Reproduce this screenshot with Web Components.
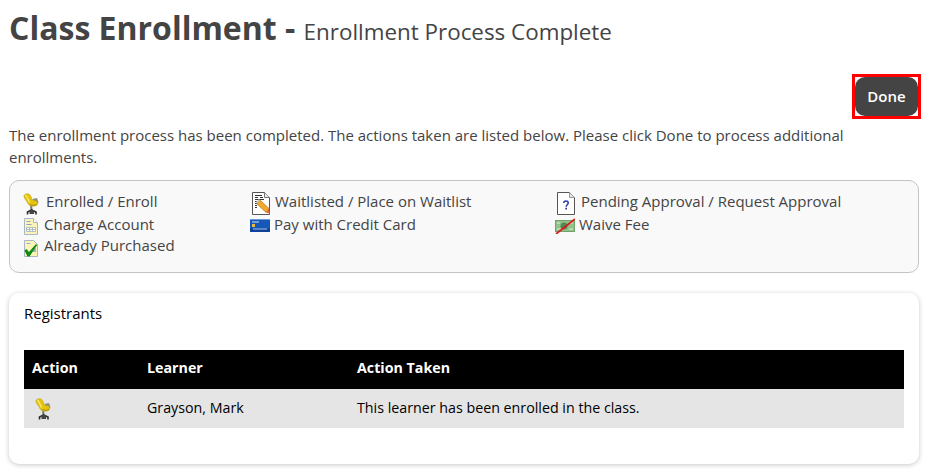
<!DOCTYPE html>
<html>
<head>
<meta charset="utf-8">
<title>Class Enrollment</title>
<style>
  html, body { margin: 0; padding: 0; background: #fff; }
  body { font-family: "Open Sans", sans-serif; color: #444; min-height: 474px; }
</style>
</head>
<body>
<enroll-page>
  <page-title slot="title" sub="Enrollment Process Complete">Class Enrollment -</page-title>
  <done-button slot="action">Done</done-button>
  <span slot="intro">The enrollment process has been completed. The actions taken are listed below. Please click Done to process additional enrollments.</span>
  <icon-legend slot="legend"></icon-legend>
  <registrant-card slot="card" heading="Registrants"></registrant-card>
</enroll-page>

<script>
const ICONS = {
  chair: `<svg viewBox="0 0 16 22" width="16" height="22">
    <path d="M8 13l.6 4" stroke="#777" stroke-width="2"/>
    <path d="M4.500 21.500v-2.500l4-2 4.500 2v2.500" fill="none" stroke="#2c2c2c" stroke-width="1.600"/>
    <path d="M6.500 17h4.500v4H6.500z" fill="#444"/>
    <path d="M9.500 6l4.500-1 1.500 4.500-3 2z" fill="#8c8c84"/>
    <path d="M1 2.500C2 .5 6 0 7.500 2.500L9.500 7l3.500.8c2 .7 2.300 3 1 4.200-2.300 1.800-5.800 1.500-7.500.5C5 11.500 4.500 9.500 3.500 8 2.300 6.300.5 4.500 1 2.500z" fill="#e6c30e" stroke="#b39a10" stroke-width=".5"/>
    <path d="M2.500 2c1.500 1.500 2.800 4.500 4 7.500" fill="none" stroke="#f8e86a" stroke-width="1.500"/>
    <path d="M7 11.500c2 1 5 1 7 0" fill="none" stroke="#a98c0a" stroke-width="1"/>
  </svg>`,
  sheet: `<svg viewBox="0 0 14 17" width="14" height="17">
    <path d="M.5.500h9l4 4v12H.5z" fill="#faf4b8" stroke="#a9b6c6"/>
    <path d="M9.500.500v4h4" fill="#fff" stroke="#a9b6c6"/>
    <path d="M2.500 3h4v1h-4zM2.500 6h5v1h-5z" fill="#8fa3c0"/>
    <path d="M2.500 9.500h9v4h-9z" fill="#fffde8" stroke="#9fb0c6" stroke-width=".8"/>
    <path d="M5.500 9.500v4M8.500 9.500v4M2.500 11.500h9" stroke="#9fb0c6" stroke-width=".8"/>
  </svg>`,
  purchased: `<svg viewBox="0 0 14 17" width="14" height="17">
    <path d="M.5.500h9l4 4v12H.5z" fill="#faf4b8" stroke="#a9b6c6"/>
    <path d="M2.500 3h4v1h-4zM8.500 8h3.500v4H8.500z" fill="#9fb0c6"/>
    <path d="M.5 10.500l2-1.500 2.500 3 6.500-7.500h2L5.500 16.500H3.500z" fill="#0f8a12"/>
  </svg>`,
  waitlist: `<svg viewBox="0 0 18 23" width="18" height="23">
    <path d="M.5.500h12l5 5v17H.5z" fill="#fff" stroke="#555"/>
    <path d="M12.500.500v5h5" fill="#e8e8e8" stroke="#777"/>
    <path d="M3 3.500h7M3 5.500h3M8 5.500h3M3 7.500h9M3 9.500h4M3 11.500h3M3 13.500h2M3 15.500h2" stroke="#333" stroke-width="1"/>
    <path d="M5 12l3-4 9 8.500-3 4z" fill="#f0a92a" stroke="#b36f10" stroke-width=".6"/>
    <path d="M14 20.500l3-4 1 5z" fill="#e2603a"/>
    <path d="M5 12l-1-2 3-3 1 1z" fill="#c9c9c9"/>
  </svg>`,
  card: `<svg viewBox="0 0 20 13" width="20" height="13">
    <rect width="20" height="13" rx="1" fill="#1757b8"/>
    <path d="M0 9.500h20V13H0z" fill="#0f429a"/>
    <path d="M0 0h20v1H0z" fill="#6a9ade"/>
    <path d="M2 2.500h7v1H2z" fill="#d6e4f6"/>
    <path d="M2 5h3v3H2z" fill="#e9b83e"/>
    <path d="M3 9.500h14v1H3z" fill="#a9c4e8"/>
  </svg>`,
  pending: `<svg viewBox="0 0 18 23" width="18" height="23">
    <path d="M.5.500h12l5 5v17H.5z" fill="#fff" stroke="#555"/>
    <path d="M12.500.500v5h5" fill="#e4e4e4" stroke="#999"/>
    <path d="M6.800 11c0-2.800 4.400-2.800 4.400 0 0 1.800-2 1.800-2 3.700" fill="none" stroke="#2a3ab0" stroke-width="1.500"/>
    <path d="M8.300 15.700h1.700v1.800H8.300z" fill="#2a3ab0"/>
  </svg>`,
  waive: `<svg viewBox="0 0 20 16" width="20" height="16">
    <rect y="2" width="20" height="12" fill="#6fa468"/>
    <path d="M1 3h18v10H1z" fill="#94c08a"/>
    <ellipse cx="9" cy="8" rx="3.500" ry="3.500" fill="#4f8a4e"/>
    <path d="M2 5h3M14 5h4M2 11h4M14 11h4" stroke="#dcebd6" stroke-width="1"/>
    <path d="M1 16L20 1" stroke="#e0141a" stroke-width="1.700"/>
  </svg>`
};

class ActionIcon extends HTMLElement {
  constructor() {
    super();
    this.attachShadow({ mode: "open" });
  }
  connectedCallback() {
    this.shadowRoot.innerHTML = `<style>:host{display:inline-flex;flex:none} svg{display:block}</style>${ICONS[this.getAttribute("name")]}`;
  }
}
customElements.define("action-icon", ActionIcon);

const pageTemplate = document.createElement("template");
pageTemplate.innerHTML = `
<style>
  :host { display: block; padding: 0 10px 0 9px; }
  .action { display: flex; justify-content: flex-end; margin: 0 -2px 0 0; padding-top: 29px; }
  .intro { font-size: 15px; line-height: 22px; margin-top: 5px; color: #444; }
  .legend { margin-top: 12px; }
  .card { margin-top: 20px; }
</style>
<slot name="title"></slot>
<div class="action"><slot name="action"></slot></div>
<div class="intro"><slot name="intro"></slot></div>
<div class="legend"><slot name="legend"></slot></div>
<div class="card"><slot name="card"></slot></div>
`;
class EnrollPage extends HTMLElement {
  constructor() {
    super();
    this.attachShadow({ mode: "open" }).appendChild(pageTemplate.content.cloneNode(true));
  }
}
customElements.define("enroll-page", EnrollPage);

class PageTitle extends HTMLElement {
  constructor() {
    super();
    this.attachShadow({ mode: "open" });
  }
  connectedCallback() {
    this.shadowRoot.innerHTML = `
    <style>
      :host { display: block; height: 45px; color: #444; white-space: nowrap; }
      .main { font-size: 32px; font-weight: 700; line-height: 56px; }
      .sub { font-size: 22.4px; font-weight: 400; margin-left: 0; }
    </style>
    <div class="main"><slot></slot> <span class="sub"></span></div>`;
    this.shadowRoot.querySelector(".sub").textContent = this.getAttribute("sub");
  }
}
customElements.define("page-title", PageTitle);

class DoneButton extends HTMLElement {
  constructor() {
    super();
    this.attachShadow({ mode: "open" }).innerHTML = `
    <style>
      :host { display: block; border: 3px solid #f00; }
      button {
        display: block; width: 63px; height: 39px; padding: 0 0 2px; border: 0; border-radius: 10px;
        background: #444; color: #fff; font: 600 15px "Open Sans", sans-serif;
      }
    </style>
    <button><slot></slot></button>`;
  }
}
customElements.define("done-button", DoneButton);

const legendTemplate = document.createElement("template");
legendTemplate.innerHTML = `
<style>
  :host {
    display: grid; grid-template-columns: 227px 305px 1fr;
    box-sizing: border-box; height: 93px; padding: 10px 13px 0 13px;
    background: #f9f9f9; border: 1px solid #c4c4c4; border-radius: 10px;
    font-size: 15px; line-height: 20px; color: #444; align-content: start;
  }
  .item { display: flex; align-items: flex-start; white-space: nowrap; }
  .r1 { height: 23px; }
  .r2 { height: 21px; }
</style>
<div class="item r1"><action-icon name="chair" style="margin:2px 7px 0 0"></action-icon>Enrolled / Enroll</div>
<div class="item r1"><action-icon name="waitlist" style="margin:1px 5px 0 2px"></action-icon>Waitlisted / Place on Waitlist</div>
<div class="item r1"><action-icon name="pending" style="margin:1px 6px 0 2px"></action-icon>Pending Approval / Request Approval</div>
<div class="item r2"><action-icon name="sheet" style="margin:4px 6px 0 1px"></action-icon>Charge Account</div>
<div class="item r2"><action-icon name="card" style="margin:5px 4px 0 0"></action-icon>Pay with Credit Card</div>
<div class="item r2"><action-icon name="waive" style="margin:4px 4px 0 0"></action-icon>Waive Fee</div>
<div class="item"><action-icon name="purchased" style="margin:5px 6px 0 1px"></action-icon>Already Purchased</div>
`;
class IconLegend extends HTMLElement {
  constructor() {
    super();
    this.attachShadow({ mode: "open" }).appendChild(legendTemplate.content.cloneNode(true));
  }
}
customElements.define("icon-legend", IconLegend);

class RegistrantCard extends HTMLElement {
  constructor() {
    super();
    this.attachShadow({ mode: "open" });
  }
  connectedCallback() {
    const rows = [{ icon: "chair", learner: "Grayson, Mark", action: "This learner has been enrolled in the class." }];
    this.shadowRoot.innerHTML = `
    <style>
      :host {
        display: block; box-sizing: border-box; height: 171px; padding: 10px 15px 0;
        background: #fff; border-radius: 10px; box-shadow: 0 1px 5px rgba(0,0,0,.22);
        font-size: 14.25px; color: #000;
      }
      h2 { margin: 0 0 26px; font: 400 15px/21px "Open Sans", sans-serif; }
      .row { display: grid; grid-template-columns: 115px 210px 1fr; height: 39px; align-items: center; padding-left: 8px; }
      .row > div { padding-bottom: 2px; }
      .head { background: #000; color: #fff; font-weight: 700; }
      .head > div { padding-bottom: 4px; }
      .body { background: #e5e5e5; }
      .row > .cell-icon { padding: 0 0 0 3px; display: flex; }
    </style>
    <h2>${this.getAttribute("heading")}</h2>
    <div class="row head"><div>Action</div><div>Learner</div><div>Action Taken</div></div>
    ${rows.map(r => `<div class="row body"><div class="cell-icon"><action-icon name="${r.icon}"></action-icon></div><div>${r.learner}</div><div>${r.action}</div></div>`).join("")}`;
  }
}
customElements.define("registrant-card", RegistrantCard);
</script>
</body>
</html>
